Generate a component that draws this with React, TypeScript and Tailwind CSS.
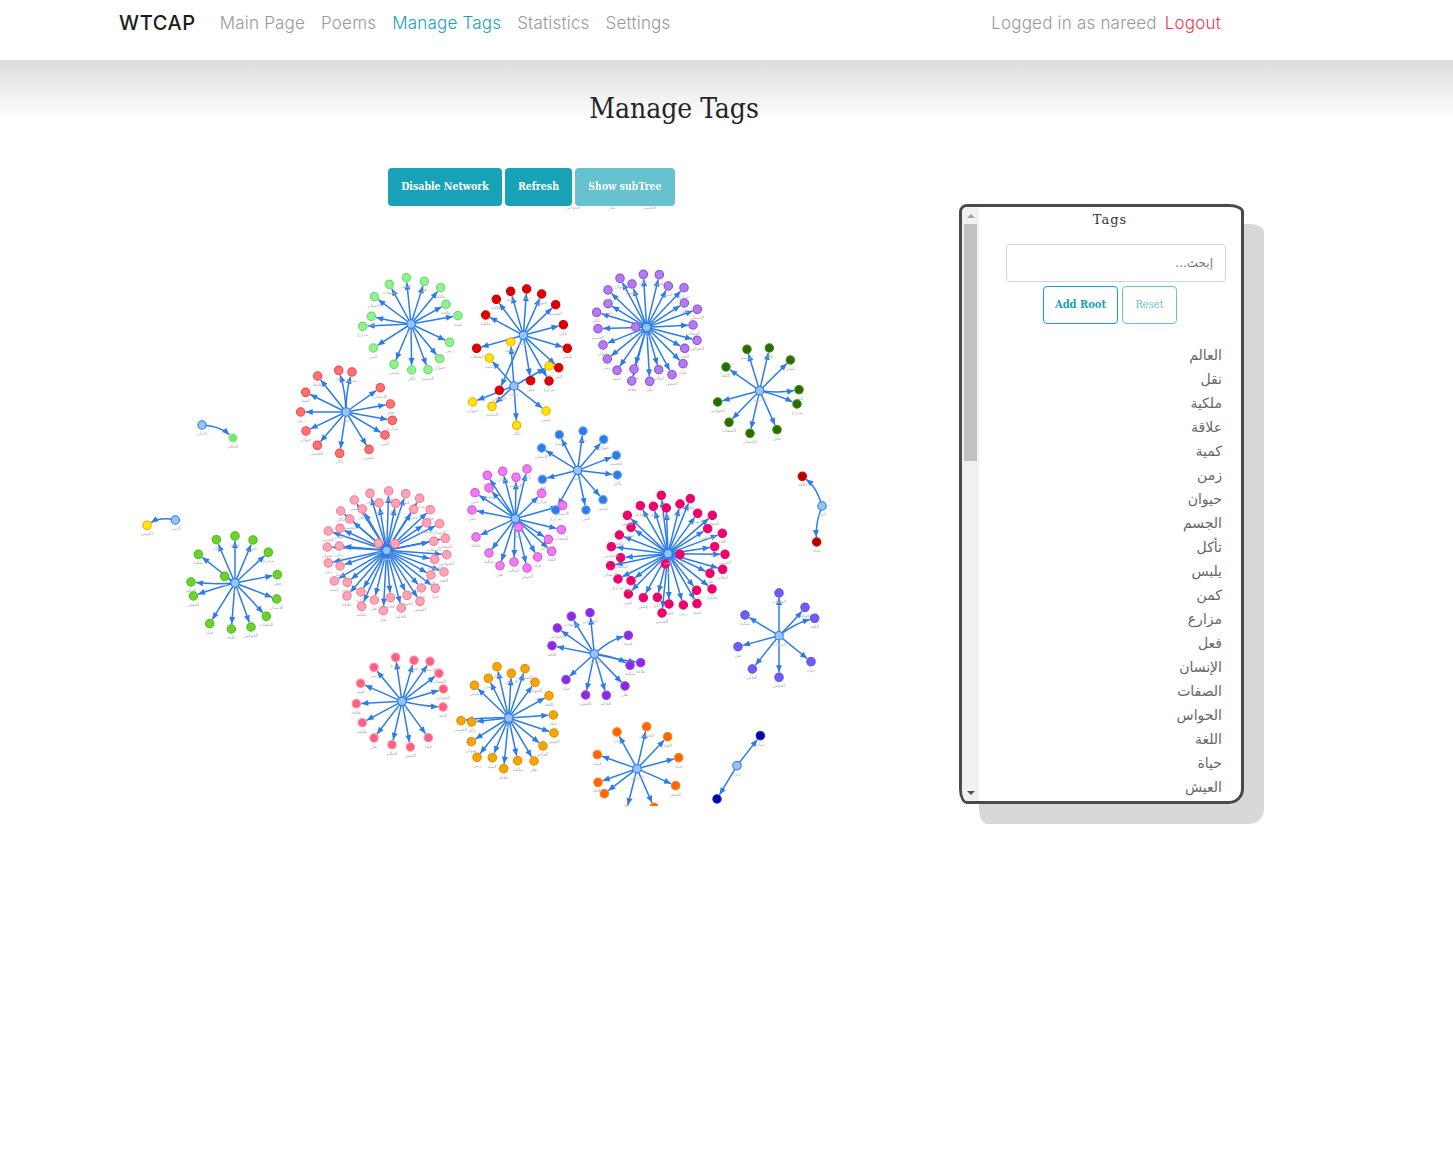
type Cluster = {
  center: number[];
  fill: string;
  stroke: string;
  nodes: number[][];
};

// zoomed coords (3x) back to page coords, third value is the edge bend in px
const z = (ox: number, oy: number, list: number[][]) =>
  list.map(([x, y, b]) => [ox + x / 3, oy + y / 3, b ?? 0]);

const c = (ox: number, oy: number, x: number, y: number) => [ox + x / 3, oy + y / 3];

const clusters: Cluster[] = [
  {
    center: c(290, 260, 363, 192),
    fill: "#93ef93",
    stroke: "#66dd66",
    nodes: z(290, 260, [[349, 53], [403, 64], [452, 83], [468, 133], [504, 167], [479, 247], [449, 296], [414, 329], [365, 330], [312, 313], [250, 264], [218, 199], [244, 169, -1], [253, 110], [298, 73]]),
  },
  {
    center: c(290, 260, 168, 456),
    fill: "#ff7272",
    stroke: "#ff4040",
    nodes: z(290, 260, [[146, 331, 3], [186, 336, -3], [83, 348], [47, 397], [32, 456], [48, 513], [82, 556], [149, 580], [237, 568], [285, 525], [307, 481], [301, 432], [271, 383]]),
  },
  {
    center: c(290, 260, 700, 226),
    fill: "#dd0000",
    stroke: "#cc0000",
    nodes: z(290, 260, [[587, 165], [619, 118], [662, 94], [710, 87], [755, 102], [797, 134], [820, 194], [832, 265], [806, 323], [777, 363], [722, 362], [628, 391], [560, 265]]),
  },
  {
    center: c(290, 260, 672, 378),
    fill: "#ffe600",
    stroke: "#ffa500",
    nodes: z(290, 260, [[662, 246], [598, 294], [777, 318], [548, 426], [606, 439], [680, 496], [768, 453]]),
  },
  {
    center: c(460, 420, 353, 151),
    fill: "#2b7ce9",
    stroke: "#6aa8f5",
    nodes: z(460, 420, [[298, 44], [369, 33], [431, 58], [469, 106], [472, 165], [429, 239], [378, 270], [287, 270], [247, 178], [245, 84]]),
  },
  {
    center: c(460, 420, 166, 296),
    fill: "#e97fe9",
    stroke: "#e346f2",
    nodes: z(460, 420, [[82, 166], [128, 154], [168, 172], [201, 147], [87, 204], [45, 218], [245, 220], [36, 270], [308, 256], [304, 329], [265, 358], [275, 394], [233, 411], [201, 444], [162, 426], [120, 437], [87, 399], [48, 351], [176, 322]]),
  },
  {
    center: c(590, 260, 170, 202),
    fill: "#b07ee8",
    stroke: "#9544f0",
    nodes: z(590, 260, [[90, 55], [126, 72], [160, 43], [208, 44], [235, 78], [282, 83], [283, 129], [322, 148], [309, 195], [321, 241], [284, 265], [279, 311], [246, 344], [206, 329], [179, 364], [132, 327], [125, 363], [81, 331], [52, 297], [39, 255], [24, 206], [20, 157], [54, 131], [54, 90], [137, 201]]),
  },
  {
    center: c(590, 260, 509, 392),
    fill: "#2c6a00",
    stroke: "#3a9000",
    nodes: z(590, 260, [[471, 268], [538, 264], [601, 300], [627, 389, 3], [621, 432, -2], [561, 509], [480, 520], [417, 487], [383, 426], [408, 321]]),
  },
  {
    center: c(130, 480, 315, 309),
    fill: "#6ad42a",
    stroke: "#52b820",
    nodes: z(130, 480, [[259, 179], [315, 168], [369, 180], [415, 217], [442, 284], [440, 357], [409, 409], [363, 441], [304, 447], [239, 431], [190, 348, 1], [183, 306, -2], [284, 289], [205, 223]]),
  },
  {
    center: c(130, 480, 770, 211),
    fill: "#ffa6b6",
    stroke: "#ff7590",
    nodes: z(130, 480, [[776, 33], [827, 41], [869, 55], [901, 89], [929, 131], [946, 175], [950, 224], [942, 276], [916, 325], [870, 364], [814, 384], [760, 392], [695, 379], [651, 348], [613, 303], [595, 249], [592, 201], [595, 153], [632, 93], [673, 60], [720, 40], [797, 70], [851, 88], [890, 128], [911, 184], [914, 238], [903, 285], [874, 324], [831, 346], [781, 353], [733, 360], [693, 336], [652, 307], [630, 258], [628, 198], [630, 145], [659, 117], [697, 87], [747, 69], [745, 190], [795, 191]]),
  },
  {
    center: c(600, 465, 204, 266),
    fill: "#f0006e",
    stroke: "#e00a68",
    nodes: z(600, 465, [[184, 91], [240, 117], [271, 101], [293, 145], [337, 151], [323, 191], [367, 205], [344, 245], [375, 268], [368, 313], [330, 325], [336, 372], [290, 376], [291, 416], [250, 420], [207, 417], [186, 444], [172, 397], [130, 398], [85, 387], [54, 342], [93, 347], [32, 302], [62, 278], [34, 245], [58, 210], [93, 187], [82, 151], [121, 122], [160, 124], [199, 129], [240, 268], [196, 297]]),
  },
  {
    center: c(345, 650, 171, 154),
    fill: "#ff5f80",
    stroke: "#ff8ca3",
    nodes: z(345, 650, [[152, 22], [207, 31], [255, 34], [282, 70], [295, 117], [294, 171, 2], [250, 263], [196, 291], [141, 284], [87, 264], [52, 218], [34, 161], [47, 100], [87, 52]]),
  },
  {
    center: c(345, 650, 491, 204),
    fill: "#f5a600",
    stroke: "#e08a00",
    nodes: z(345, 650, [[456, 50], [499, 70], [540, 56], [570, 97], [612, 137], [625, 195], [627, 249], [594, 288], [567, 333], [518, 332], [476, 356], [442, 323], [396, 322], [379, 275], [348, 212, 2], [380, 216], [388, 106], [430, 85]]),
  },
  {
    center: c(540, 585, 163, 207),
    fill: "#8a2be2",
    stroke: "#9440f0",
    nodes: z(540, 585, [[150, 83], [94, 94], [52, 129], [36, 182], [78, 284], [137, 330], [199, 331], [255, 303], [270, 241, -4], [302, 233, 1], [265, 151, -5]]),
  },
  {
    center: c(540, 585, 717, 152),
    fill: "#6f5cff",
    stroke: "#5a50e6",
    nodes: z(540, 585, [[717, 24], [795, 67, 1], [824, 100, -4], [813, 230], [717, 277], [637, 252], [594, 185], [615, 90]]),
  },
  {
    center: c(580, 700, 171, 206),
    fill: "#ff6600",
    stroke: "#ff7a1a",
    nodes: z(580, 700, [[200, 80], [263, 110], [296, 173], [287, 257], [222, 322], [140, 330], [73, 281], [54, 247], [52, 164], [111, 96]]),
  },
  {
    center: [822, 506],
    fill: "#b00000",
    stroke: "#e00000",
    nodes: z(600, 465, [[607, 34, 6], [650, 231, 4]]),
  },
  {
    center: c(580, 700, 471, 197),
    fill: "#0000aa",
    stroke: "#2222cc",
    nodes: z(580, 700, [[541, 107], [411, 297]]),
  },
  {
    center: c(130, 480, 136, 120),
    fill: "#ffee00",
    stroke: "#ffa500",
    nodes: z(130, 480, [[51, 136, 6]]),
  },
  {
    center: [202, 425],
    fill: "#7be46e",
    stroke: "#a6ee9c",
    nodes: [[233, 438, -6]],
  },
];

const tagNames = ["العالم", "نقل", "ملكية", "علاقة", "كمية", "زمن", "حيوان", "الجسم", "تأكل", "يلبس", "كمن", "مزارع", "فعل", "الإنسان", "الصفات", "الحواس", "اللغة", "حياة", "العيش"];

function NetworkEdge({ from, to, bend }: { from: number[]; to: number[]; bend: number }) {
  const dx = to[0] - from[0];
  const dy = to[1] - from[1];
  const len = Math.hypot(dx, dy);
  const cx = (from[0] + to[0]) / 2 + (-dy / len) * bend;
  const cy = (from[1] + to[1]) / 2 + (dx / len) * bend;
  const ax = to[0] - cx;
  const ay = to[1] - cy;
  const al = Math.hypot(ax, ay);
  const ux = ax / al;
  const uy = ay / al;
  const tipX = to[0] - ux * 5;
  const tipY = to[1] - uy * 5;
  const baseX = tipX - ux * 7;
  const baseY = tipY - uy * 7;
  return (
    <g>
      <path d={`M${from[0]} ${from[1]} Q${cx} ${cy} ${tipX} ${tipY}`} fill="none" stroke="#2b7ce9" strokeWidth={1.5} />
      <polygon
        points={`${tipX},${tipY} ${baseX - uy * 3},${baseY + ux * 3} ${baseX + uy * 3},${baseY - ux * 3}`}
        fill="#2b7ce9"
      />
    </g>
  );
}

function NodeLabel({ x, y, text, fill }: { x: number; y: number; text: string; fill: string }) {
  // labels that would fall past the canvas edge are not drawn
  if (y > 802) return null;
  return (
    <text x={x} y={y} textAnchor="middle" fontSize={4.5} fill={fill} fontFamily="'DejaVu Sans', sans-serif">
      {text}
    </text>
  );
}

function Network() {
  return (
    <svg width={840} height={600} viewBox="119 206 840 600" className="block blur-[0.4px]">
      {clusters.map((cl, i) =>
        cl.nodes.map((n, j) => <NetworkEdge key={`${i}-${j}`} from={cl.center} to={n} bend={n[2] ?? 0} />)
      )}
      {clusters.map((cl, i) => (
        <g key={i}>
          {cl.nodes.map((n, j) => (
            <g key={j}>
              <circle cx={n[0]} cy={n[1]} r={4.2} fill={cl.fill} stroke={cl.stroke} strokeWidth={1.1} />
              <NodeLabel x={n[0]} y={n[1] + 10} text={tagNames[(i + j) % tagNames.length]} fill="#b0b0b0" />
            </g>
          ))}
          <circle cx={cl.center[0]} cy={cl.center[1]} r={4.2} fill="#97c2fc" stroke="#2b7ce9" strokeWidth={1.1} />
          <NodeLabel x={cl.center[0]} y={cl.center[1] + 10} text={tagNames[i % tagNames.length]} fill="#c4c4c4" />
        </g>
      ))}
      <NodeLabel x={573} y={209} text="الحواس" fill="#bbbbbb" />
      <NodeLabel x={612} y={209} text="نقل" fill="#bbbbbb" />
      <NodeLabel x={650} y={209} text="الجسم" fill="#bbbbbb" />
    </svg>
  );
}

function FakeScrollbar() {
  return (
    <div className="flex w-[17px] shrink-0 flex-col items-center bg-[#f1f1f1]">
      <div className="flex h-[17px] w-full items-center justify-center">
        <div className="h-0 w-0 border-x-[4px] border-b-[4px] border-x-transparent border-b-[#a3a3a3]" />
      </div>
      <div className="h-[237px] w-[13px] bg-[#c1c1c1]" />
      <div className="mt-auto flex h-[17px] w-full items-center justify-center">
        <div className="h-0 w-0 border-x-[4px] border-t-[4px] border-x-transparent border-t-[#505050]" />
      </div>
    </div>
  );
}

function TagsPanel() {
  return (
    <div className="mt-[36px] flex h-[600px] w-[285px] shrink-0 overflow-hidden rounded-[8px_15px_15px_8px/8px_8px_15px_15px] border-[3px] border-[#4a4a4a] bg-white shadow-[20px_20px_0_#d8d8d8]">
      <FakeScrollbar />
      <div className="min-w-0 flex-1 overflow-hidden">
        <h5 className="pt-[2px] text-center text-[13px] leading-[22px] tracking-[1px] text-[#333] font-['DejaVu_Serif',serif]">
          Tags
        </h5>
        <div className="mt-[13px] ml-[27px] w-[220px]">
          <input
            dir="rtl"
            placeholder="إبحث..."
            className="block h-[38px] w-full rounded border border-[#ced4da] px-3 text-[12px] font-['DejaVu_Sans',sans-serif] placeholder:text-[#777] outline-none"
          />
        </div>
        <div className="mt-1 flex justify-center gap-1 font-['DejaVu_Serif',serif] font-stretch-condensed text-[11px] text-[#17a2b8]">
          <button className="h-[38px] w-[75px] rounded border border-[#17a2b8] font-bold">Add Root</button>
          <button className="h-[38px] w-[55px] rounded border border-[#17a2b8] opacity-65">Reset</button>
        </div>
        <ul dir="rtl" className="mt-[19px] pr-[19px] text-[14px] leading-[24px] text-[#666] font-['DejaVu_Sans',sans-serif]">
          {tagNames.map((t) => (
            <li key={t}>{t}</li>
          ))}
        </ul>
      </div>
    </div>
  );
}

export default function App() {
  return (
    <div className="min-h-[1175px] bg-white">
      <nav className="flex h-[60px] items-start pl-[119px] pr-[232px] pt-[11px] text-[17px] font-light leading-[24px] tracking-[0.2px] text-[#999] font-['Inter',sans-serif]">
        <a className="mr-[24px] text-[20px] font-medium tracking-[0.6px] text-[#1c1c1c]">WTCAP</a>
        <div className="flex gap-4">
          <a>Main Page</a>
          <a>Poems</a>
          <a className="text-[#17a2b8]">Manage Tags</a>
          <a>Statistics</a>
          <a>Settings</a>
        </div>
        <div className="ml-auto flex gap-2">
          <span>Logged in as nareed</span>
          <a className="text-[#ec3a50]">Logout</a>
        </div>
      </nav>
      <header className="h-[108px] bg-linear-to-b from-[#dcdcdc] to-white to-[55%] pl-[119px] pt-[31px]">
        <h1 className="w-[1110px] text-center text-[28px] leading-[36px] text-[#212529] font-['DejaVu_Serif',serif] font-stretch-condensed">
          Manage Tags
        </h1>
      </header>
      <main className="flex items-start pl-[119px]">
        <div className="w-[840px] shrink-0">
          <div className="flex w-[825px] justify-center gap-[3px] font-['DejaVu_Serif',serif] font-stretch-condensed text-[10.5px] font-bold text-white">
            <button className="h-[38px] w-[114px] rounded bg-[#17a2b8]">Disable Network</button>
            <button className="h-[38px] w-[67px] rounded bg-[#17a2b8]">Refresh</button>
            <button className="h-[38px] w-[100px] rounded bg-[#17a2b8] opacity-65">Show subTree</button>
          </div>
          <Network />
        </div>
        <TagsPanel />
      </main>
    </div>
  );
}
